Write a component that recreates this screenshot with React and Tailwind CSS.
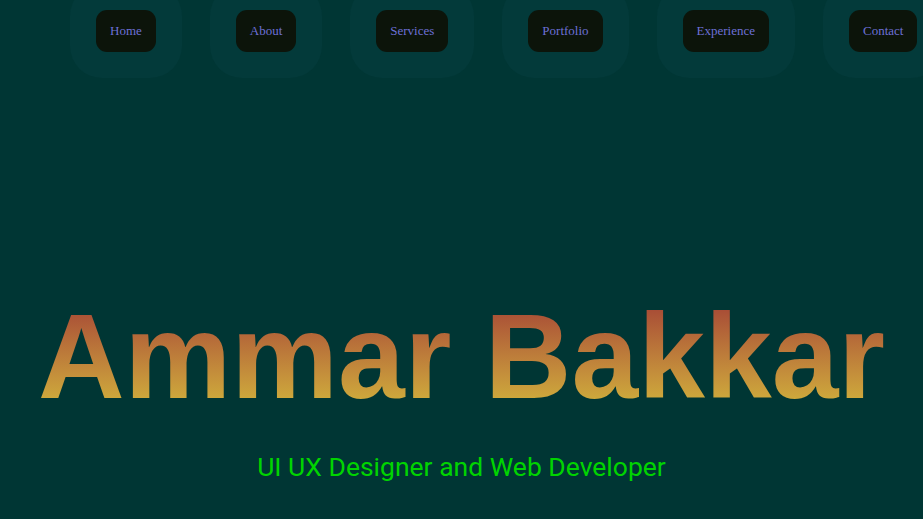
import React from "react";

const links = ["Home", "About", "Services", "Portfolio", "Experience", "Contact"];

export default function App() {
  return (
    <div className="min-h-[519px] w-full overflow-hidden bg-[#003634]">
      {/* top navigation */}
      <nav className="flex gap-[28px] pl-[70px] -mt-[16px] w-max">
        {links.map((l) => (
          <div key={l} className="rounded-[32px] bg-[#033a3a] p-[26px]">
            <a
              href="#"
              className="flex h-[42px] items-center rounded-[11px] bg-[#0c140a] px-[14px] text-[13px] text-[#6c70d6] font-['Liberation_Serif',serif]"
            >
              {l}
            </a>
          </div>
        ))}
      </nav>

      {/* hero */}
      <section className="mt-[218px] flex flex-col items-center">
        <h1 className="bg-gradient-to-b from-[#a23f34] to-[#d3b93b] bg-clip-text text-[120px] font-bold leading-none text-transparent font-['Liberation_Sans',Arial,sans-serif]">
          Ammar Bakkar
        </h1>
        <p className="mt-[31px] text-[26.5px] text-[#00d400] font-['Roboto',sans-serif]">
          UI UX Designer and Web Developer
        </p>
      </section>
    </div>
  );
}
